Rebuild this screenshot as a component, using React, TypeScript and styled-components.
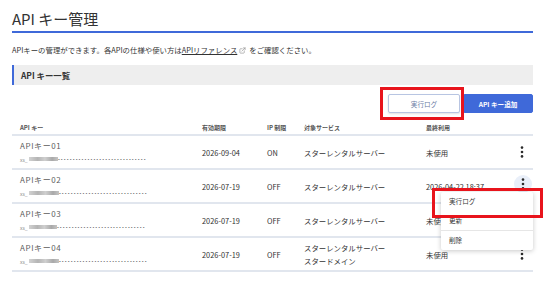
import React from 'react';
import styled, { createGlobalStyle } from 'styled-components';
import { ExternalLink } from 'lucide-react';

const blue = '#3f69d9';
const red = '#e8141c';
const textColor = '#333333';
const lineColor = '#e1e6ee';

const GlobalStyle = createGlobalStyle`
  html, body {
    margin: 0;
    background: #ffffff;
  }
  body {
    font-family: "Noto Sans CJK JP", "Noto Sans", sans-serif;
    color: ${textColor};
  }
`;

const Page = styled.div`
  width: 521px;
  padding: 8px 17px 0 12px;
`;

const Title = styled.h1`
  margin: 0;
  height: 22px;
  font-size: 15px;
  line-height: 22px;
  font-weight: 400;
  color: #333;
  border-bottom: 2px solid ${blue};
  padding-bottom: 1px;
`;

const Description = styled.p`
  margin: 11px 0 0;
  font-size: 7.4px;
  line-height: 12px;
  color: #333;
  display: flex;
  align-items: center;
`;

const RefLink = styled.a`
  color: #333;
  text-decoration: underline;
`;

const LinkIcon = styled(ExternalLink)`
  margin: 0 3px 0 2px;
  color: #888;
`;

const SectionHeader = styled.h2`
  margin: 9px 0 0;
  height: 20px;
  line-height: 20px;
  background: #eeeeee;
  border-left: 2px solid ${blue};
  padding-left: 7px;
  font-size: 8.4px;
  font-weight: 700;
  color: #333;
`;

const Toolbar = styled.div`
  display: flex;
  justify-content: flex-end;
  gap: 3px;
  margin-top: 9px;
`;

const Annotated = styled.div<{ $inset: string }>`
  position: relative;

  &::after {
    content: '';
    position: absolute;
    inset: ${(p) => p.$inset};
    border: 3px solid ${red};
    pointer-events: none;
  }
`;

const Button = styled.button<{ $primary?: boolean }>`
  display: block;
  height: 19px;
  width: ${(p) => (p.$primary ? '70px' : '72px')};
  border-radius: 2px;
  font-family: inherit;
  font-size: 6.6px;
  font-weight: ${(p) => (p.$primary ? 700 : 400)};
  color: ${(p) => (p.$primary ? '#ffffff' : '#6a7ba3')};
  background: ${(p) => (p.$primary ? blue : '#ffffff')};
  border: 1px solid ${(p) => (p.$primary ? blue : '#b8c5e2')};
  box-shadow: ${(p) => (p.$primary ? 'none' : '0 1px 2px rgba(0,0,0,0.12)')};
  padding: 0;
`;

const Table = styled.div`
  margin-top: 7px;
`;

const cols = '182px 65px 37px 122px 92px 23px';

const HeadRow = styled.div`
  display: grid;
  grid-template-columns: ${cols};
  height: 14px;
  align-items: center;
  border-bottom: 2px solid ${lineColor};
`;

const HeadCell = styled.div`
  padding-left: 8px;
  font-size: 6px;
  font-weight: 700;
  color: #555;
`;

const Row = styled.div`
  display: grid;
  grid-template-columns: ${cols};
  height: 32px;
  align-items: center;
  border-bottom: 2px solid ${lineColor};
`;

const Cell = styled.div`
  padding-left: 8px;
  font-size: 7.4px;
  line-height: 13px;
  color: #333;
  white-space: nowrap;
`;

const KeyName = styled.div`
  font-size: 8px;
  line-height: 12px;
  margin-bottom: 2px;
  letter-spacing: 0.6px;
  color: #5c5c5c;
`;

const KeyValue = styled.div`
  display: flex;
  align-items: center;
  height: 10px;
  font-size: 5px;
  color: #888;
`;

const Blurred = styled.span<{ $w: number }>`
  display: inline-block;
  width: ${(p) => p.$w}px;
  height: 4px;
  margin-left: 1px;
  background: linear-gradient(90deg, #d2d2d2 0%, #b4b4b4 30%, #cfcfcf 55%, #a9a9a9 80%, #c4c4c4 100%);
  filter: blur(0.7px);
`;

const Stars = styled.span`
  font-family: "DejaVu Sans", sans-serif;
  font-size: 4px;
  letter-spacing: 0.6px;
  color: #777;
  transform: translateY(-0.5px);
`;

const KebabCell = styled.div`
  position: relative;
  height: 100%;
  display: flex;
  align-items: center;
  justify-content: center;
`;

const KebabButton = styled.span<{ $active?: boolean }>`
  width: 18px;
  height: 18px;
  border-radius: 50%;
  display: flex;
  align-items: center;
  justify-content: center;
  background: ${(p) => (p.$active ? '#e9eff9' : 'transparent')};
  transform: ${(p) => (p.$active ? 'translate(1px, -2px)' : 'none')};
`;

const Menu = styled.div`
  position: absolute;
  top: 22px;
  right: 0;
  width: 92px;
  background: #ffffff;
  border-radius: 2px;
  box-shadow: 0 1px 5px rgba(0, 0, 0, 0.22);
  z-index: 2;
`;

const MenuItem = styled.div`
  height: 19px;
  line-height: 19px;
  padding-left: 8px;
  font-size: 6.6px;
  color: #333;
  border-bottom: 1px solid #e6e6e6;

  &:last-child {
    border-bottom: none;
  }
`;

const Kebab = () => (
  <svg width="4" height="12" viewBox="0 0 4 12">
    <circle cx="2" cy="1.6" r="1.3" fill="#2b2b2b" />
    <circle cx="2" cy="6" r="1.3" fill="#2b2b2b" />
    <circle cx="2" cy="10.4" r="1.3" fill="#2b2b2b" />
  </svg>
);

interface ApiKey {
  name: string;
  blur: number;
  expires: string;
  ip: string;
  services: string[];
  last: string;
  open?: boolean;
}

const keys: ApiKey[] = [
  { name: 'APIキー01', blur: 29, expires: '2026-09-04', ip: 'ON', services: ['スターレンタルサーバー'], last: '未使用' },
  { name: 'APIキー02', blur: 30, expires: '2026-07-19', ip: 'OFF', services: ['スターレンタルサーバー'], last: '2026-04-22 18:37', open: true },
  { name: 'APIキー03', blur: 28, expires: '2026-07-19', ip: 'OFF', services: ['スターレンタルサーバー'], last: '未使用' },
  { name: 'APIキー04', blur: 30, expires: '2026-07-19', ip: 'OFF', services: ['スターレンタルサーバー', 'スタードメイン'], last: '未使用' }
];

const App = () => {
  return (
    <Page>
      <GlobalStyle />
      <Title>API キー管理</Title>
      <Description>
        APIキーの管理ができます。各APIの仕様や使い方は
        <RefLink href="#">APIリファレンス</RefLink>
        <LinkIcon size={7} strokeWidth={2} />
        をご確認ください。
      </Description>
      <SectionHeader>API キー一覧</SectionHeader>
      <Toolbar>
        <Annotated $inset="-7px -4px -7px -8px">
          <Button>実行ログ</Button>
        </Annotated>
        <Button $primary>API キー追加</Button>
      </Toolbar>
      <Table>
        <HeadRow>
          <HeadCell>API キー</HeadCell>
          <HeadCell>有効期限</HeadCell>
          <HeadCell>IP 制限</HeadCell>
          <HeadCell>対象サービス</HeadCell>
          <HeadCell>最終利用</HeadCell>
          <HeadCell />
        </HeadRow>
        {keys.map((key) => (
          <Row key={key.name}>
            <Cell>
              <KeyName>{key.name}</KeyName>
              <KeyValue>
                xs_
                <Blurred $w={key.blur} />
                <Stars>{'•'.repeat(30)}</Stars>
              </KeyValue>
            </Cell>
            <Cell>{key.expires}</Cell>
            <Cell>{key.ip}</Cell>
            <Cell>
              {key.services.map((s) => (
                <div key={s}>{s}</div>
              ))}
            </Cell>
            <Cell>{key.last}</Cell>
            <KebabCell>
              <KebabButton $active={key.open}>
                <Kebab />
              </KebabButton>
              {key.open && (
                <Menu>
                  <Annotated $inset="-4px -10px -7px -9px">
                    <MenuItem>実行ログ</MenuItem>
                  </Annotated>
                  <MenuItem>更新</MenuItem>
                  <MenuItem>削除</MenuItem>
                </Menu>
              )}
            </KebabCell>
          </Row>
        ))}
      </Table>
    </Page>
  );
};

export default App;
